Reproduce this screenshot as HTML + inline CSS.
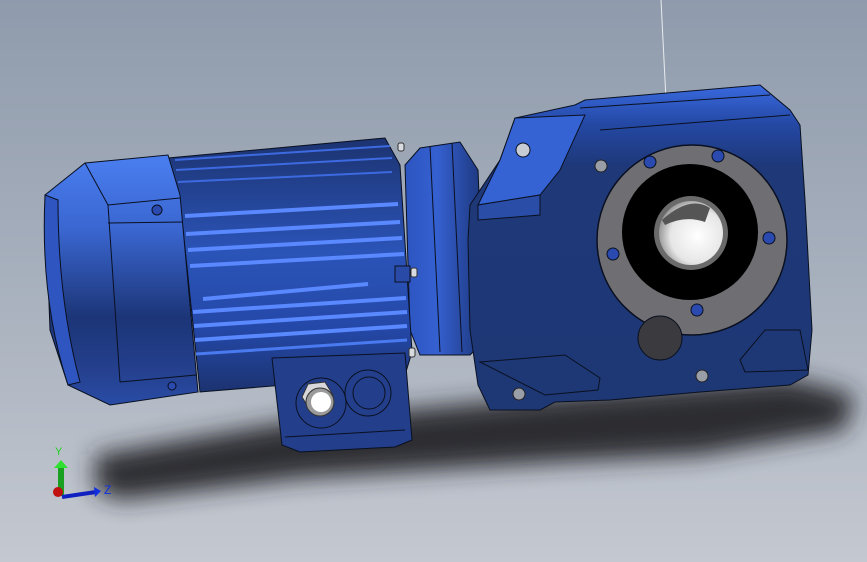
<!DOCTYPE html>
<html><head><style>
html,body{margin:0;padding:0;width:867px;height:562px;overflow:hidden}
svg{display:block}
</style></head><body>
<svg width="867" height="562" viewBox="0 0 867 562" xmlns="http://www.w3.org/2000/svg">
<defs>
<linearGradient id="bg" x1="0" y1="0" x2="0" y2="1">
<stop offset="0" stop-color="#8f9bac"/><stop offset="0.5" stop-color="#a7b0bd"/><stop offset="1" stop-color="#c4c8d0"/>
</linearGradient>
<filter id="blur" x="-20%" y="-50%" width="140%" height="200%"><feGaussianBlur stdDeviation="12"/></filter>
<linearGradient id="fan" x1="0" y1="0" x2="0" y2="1">
<stop offset="0" stop-color="#4a7ef0"/><stop offset="0.3" stop-color="#3a66d0"/><stop offset="0.65" stop-color="#1c3577"/><stop offset="0.85" stop-color="#243f8c"/><stop offset="1" stop-color="#2a4ca6"/>
</linearGradient>
<linearGradient id="body" x1="0" y1="0" x2="0" y2="1">
<stop offset="0" stop-color="#1c3370"/><stop offset="0.45" stop-color="#2b54b8"/><stop offset="0.75" stop-color="#2448a8"/><stop offset="1" stop-color="#1c3370"/>
</linearGradient>
<linearGradient id="gb" x1="0" y1="0" x2="0" y2="1">
<stop offset="0" stop-color="#3a6ae0"/><stop offset="0.12" stop-color="#2448a4"/><stop offset="0.25" stop-color="#1e3878"/><stop offset="1" stop-color="#1e3876"/>
</linearGradient>
<radialGradient id="bore" cx="0.6" cy="0.55" r="0.6">
<stop offset="0" stop-color="#ffffff"/><stop offset="0.7" stop-color="#e6e6e6"/><stop offset="1" stop-color="#9a9a9a"/>
</radialGradient>
<linearGradient id="flg" x1="0" y1="0" x2="1" y2="0">
<stop offset="0" stop-color="#2c55c0"/><stop offset="0.4" stop-color="#3560d0"/><stop offset="1" stop-color="#1c3578"/>
</linearGradient>
</defs>
<rect width="867" height="562" fill="url(#bg)"/>
<!-- shadow -->
<path d="M95 455 L300 420 L560 395 L790 378 L855 395 L845 430 L700 455 L560 462 L300 478 L120 500 L95 490 Z" fill="#25272c" filter="url(#blur)" opacity="0.95"/>
<!-- wire -->
<line x1="661" y1="0" x2="666" y2="100" stroke="#e8ecf0" stroke-width="1"/>
<!-- flange -->
<path d="M405 165 L420 148 L460 142 L478 170 L485 340 L470 355 L420 355 L410 330 Z" fill="url(#flg)" stroke="#0a1020" stroke-width="1"/>
<line x1="430" y1="146" x2="440" y2="352" stroke="#0a1020"/>
<line x1="452" y1="143" x2="462" y2="352" stroke="#0a1020"/>
<!-- gearbox -->
<path d="M470 205 L500 160 L515 118 L575 105 L585 100 L760 85 L790 110 L800 125 L805 200 L812 330 L808 375 L790 385 L700 392 L610 400 L555 402 L540 410 L490 410 L478 385 L470 330 L468 240 Z" fill="url(#gb)" stroke="#0a1020" stroke-width="1"/>
<path d="M515 118 L585 115 L560 170 L540 195 L478 205 L500 160 Z" fill="#3563d4" stroke="#0a1020"/>
<path d="M478 205 L540 195 L540 215 L478 220 Z" fill="#2a4ea8" stroke="#0a1020"/>
<circle cx="523" cy="150" r="7" fill="#c8ccd4" stroke="#0a1020"/>
<line x1="580" y1="108" x2="770" y2="95" stroke="#0a1020"/>
<line x1="600" y1="130" x2="790" y2="115" stroke="#0a1020"/>
<!-- feet/ribs bottom -->
<path d="M480 362 L565 355 L600 378 L598 390 L545 395 Z" fill="none" stroke="#0a1020"/>
<path d="M740 360 L765 330 L800 330 L808 370 L745 372 Z" fill="none" stroke="#0a1020"/>
<!-- ring -->
<circle cx="692" cy="240" r="95" fill="#6f6e72" stroke="#0a1020" stroke-width="1.5"/>
<circle cx="690" cy="232" r="68" fill="#000"/>
<circle cx="691" cy="233" r="37" fill="#6a6a6a"/>
<circle cx="691" cy="233" r="32" fill="url(#bore)"/>
<path d="M662 220 Q690 195 710 208 L705 222 Q685 215 665 225 Z" fill="#555"/>
<g fill="#2a4ab0" stroke="#0a1020">
<circle cx="650" cy="162" r="6"/><circle cx="718" cy="156" r="6"/><circle cx="769" cy="238" r="6"/><circle cx="613" cy="254" r="6"/><circle cx="697" cy="310" r="6"/>
</g>
<circle cx="660" cy="338" r="22" fill="#3b3b3f" stroke="#0a1020"/>
<g fill="#9a9ea6" stroke="#222">
<circle cx="601" cy="166" r="6"/><circle cx="519" cy="394" r="6"/><circle cx="702" cy="376" r="6"/>
</g>
<!-- motor body -->
<path d="M168 158 L385 138 L400 165 L412 352 L405 375 L200 392 L180 200 Z" fill="url(#body)" stroke="#0a1020" stroke-width="1"/>
<g stroke="#0a1020" stroke-width="1.2">
<line x1="175" y1="160" x2="390" y2="146" stroke="#3d6ae0" stroke-width="2"/>
<line x1="176" y1="170" x2="392" y2="158" stroke="#3d6ae0" stroke-width="2"/>
<line x1="178" y1="182" x2="392" y2="172" stroke="#3d6ae0" stroke-width="2"/>
<line x1="185" y1="216" x2="398" y2="204" stroke="#5a88ff" stroke-width="4"/>
<line x1="186" y1="234" x2="400" y2="222" stroke="#5a88ff" stroke-width="4"/>
<line x1="188" y1="250" x2="402" y2="238" stroke="#5a88ff" stroke-width="4"/>
<line x1="190" y1="266" x2="404" y2="254" stroke="#5a88ff" stroke-width="4"/>
<line x1="203" y1="299" x2="368" y2="284" stroke="#5a88ff" stroke-width="4"/>
<line x1="193" y1="312" x2="406" y2="298" stroke="#5a88ff" stroke-width="4"/>
<line x1="194" y1="326" x2="407" y2="312" stroke="#5a88ff" stroke-width="4"/>
<line x1="195" y1="340" x2="407" y2="326" stroke="#5a88ff" stroke-width="4"/>
<line x1="196" y1="354" x2="407" y2="340" stroke="#4a7af0" stroke-width="3"/>
</g>
<rect x="395" y="266" width="15" height="16" fill="#2a4aa8" stroke="#0a1020"/>
<g fill="#d8dbe0" stroke="#333"><rect x="398" y="143" width="6" height="8" rx="2"/><rect x="411" y="268" width="6" height="9" rx="2"/><rect x="409" y="348" width="6" height="9" rx="2"/></g>
<!-- terminal box -->
<path d="M272 358 L405 353 L412 440 L395 447 L300 452 L282 445 Z" fill="#233f8c" stroke="#0a1020"/>
<line x1="285" y1="437" x2="405" y2="430" stroke="#0a1020"/>
<circle cx="321" cy="403" r="25" fill="none" stroke="#0a1020"/>
<circle cx="368" cy="393" r="23" fill="none" stroke="#0a1020"/>
<circle cx="369" cy="393" r="16" fill="none" stroke="#0a1020"/>
<polygon points="302,397 308,384 325,382 333,395 328,409 310,410" fill="#d8d8dc" stroke="#333"/>
<circle cx="320" cy="402" r="14" fill="#9a9a9a" stroke="#333"/>
<circle cx="321" cy="402" r="10" fill="#fff"/>
<!-- fan cover -->
<path d="M45 195 L85 163 L168 155 L180 195 L198 392 L110 405 L68 385 L50 330 Z" fill="url(#fan)" stroke="#0a1020" stroke-width="1"/>
<path d="M45 195 Q40 300 68 385 L80 382 Q58 300 58 200 Z" fill="#2e55c0" stroke="#0a1020"/>
<line x1="85" y1="163" x2="108" y2="205" stroke="#0a1020"/>
<line x1="108" y1="205" x2="180" y2="198" stroke="#0a1020"/>
<line x1="108" y1="223" x2="183" y2="222" stroke="#0a1020"/>
<line x1="108" y1="205" x2="120" y2="382" stroke="#0a1020"/>
<line x1="120" y1="382" x2="196" y2="375" stroke="#0a1020"/>
<circle cx="157" cy="210" r="5" fill="#2a4ab0" stroke="#0a1020"/>
<circle cx="172" cy="386" r="4" fill="#2a4ab0" stroke="#0a1020"/>
<!-- axis triad -->
<rect x="58" y="466" width="6" height="30" fill="#1aa020"/>
<polygon points="54,468 61,460 68,468" fill="#30e030"/>
<circle cx="58" cy="492" r="5" fill="#c01010"/>
<line x1="62" y1="497" x2="96" y2="492" stroke="#1020c0" stroke-width="4"/>
<polygon points="94,487 101,491 95,497" fill="#1030e0"/>
<text x="55" y="455" font-family="Liberation Sans, sans-serif" font-size="11" fill="#20d020">Y</text>
<text x="104" y="494" font-family="Liberation Sans, sans-serif" font-size="12" fill="#1030e0">Z</text>
</svg>
</body></html>
